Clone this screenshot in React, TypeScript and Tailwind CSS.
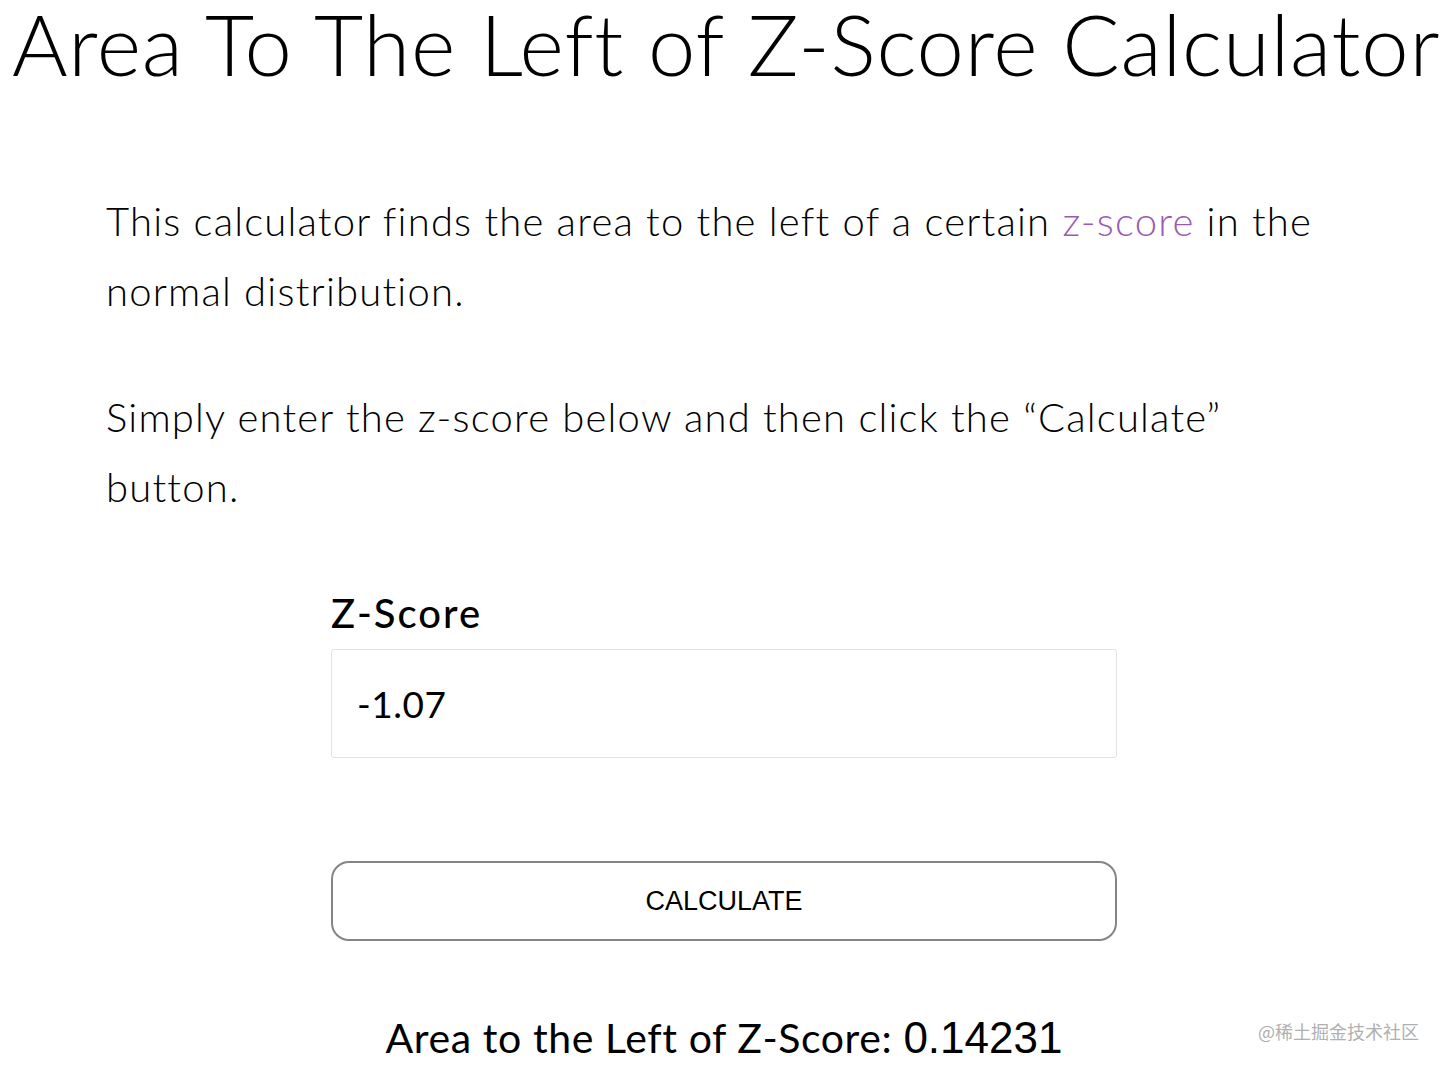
export default function App() {
  return (
    <div className="relative min-h-[1070px] w-[1446px] overflow-hidden bg-white text-black font-['Lato',sans-serif]">
      {/* Title */}
      <h1 className="whitespace-nowrap pl-[12px] text-[85px] font-light leading-[86px] tracking-[0.8px]">
        Area To The Left of Z-Score Calculator
      </h1>

      {/* Intro */}
      <div className="w-[1350px] pl-[106px] pt-[100px] text-[40px] font-light leading-[70px] tracking-[1.2px]">
        <p>
          This calculator finds the area to the left of a certain{" "}
          <a className="text-[#9b59b6]">z-score</a> in the normal distribution.
        </p>
        <p className="mt-[56px] w-[1160px]">
          Simply enter the z-score below and then click the “Calculate” button.
        </p>
      </div>

      {/* Form */}
      <div className="ml-[331px] mt-[66px] w-[786px]">
        <label className="block text-[40px] font-medium leading-[50px] tracking-[2px]">Z-Score</label>
        <div className="mt-[11px] flex h-[109px] items-center rounded-[3px] border border-[#e3e3e3] px-[25px] text-[37px] font-normal tracking-[0.5px]">
          -1.07
        </div>

        <button className="mt-[103px] flex h-[80px] w-full items-center justify-center rounded-[18px] border-2 border-[#858585] font-['Liberation_Sans',sans-serif] text-[27px]">
          CALCULATE
        </button>

        <div className="mt-[64px] flex items-baseline justify-center whitespace-nowrap">
          <span className="text-[41px] font-normal tracking-[0.6px]">Area to the Left of Z-Score:</span>
          <span className="ml-[11px] font-['Liberation_Sans',sans-serif] text-[44px]">0.14231</span>
        </div>
      </div>

      {/* Watermark */}
      <div className="absolute left-[1258px] top-[1018px] font-['Noto_Sans_CJK_SC',sans-serif] text-[18px] text-[#b0b0b0]">
        @稀土掘金技术社区
      </div>
    </div>
  );
}
